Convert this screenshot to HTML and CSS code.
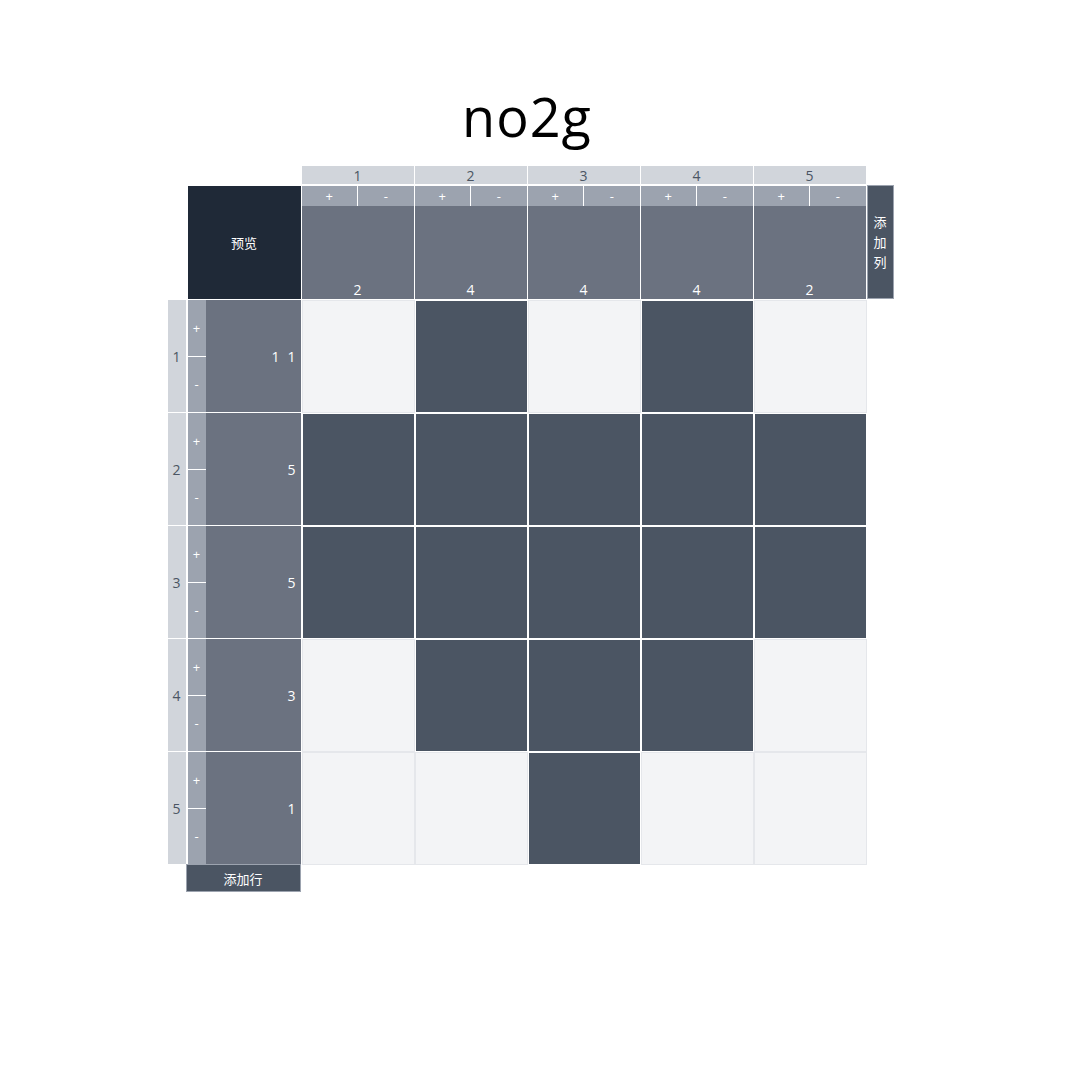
FILE: index.html
```html
<!DOCTYPE html>
<html lang="zh">
<head>
    <meta charset="UTF-8">
    <meta name="viewport" content="width=device-width, initial-scale=1.0">
    <title>no2g</title>
    <link rel="stylesheet" href="styles.css">
</head>
<body>
    <h1>no2g</h1>
    <div class="board">
        <div class="corner"><div class="preview">预览</div></div>

        <div class="col-head"><div class="num">1</div><div class="ctrl"><span>+</span><span>-</span></div><div class="clue"><span>2</span></div></div>
        <div class="col-head"><div class="num">2</div><div class="ctrl"><span>+</span><span>-</span></div><div class="clue"><span>4</span></div></div>
        <div class="col-head"><div class="num">3</div><div class="ctrl"><span>+</span><span>-</span></div><div class="clue"><span>4</span></div></div>
        <div class="col-head"><div class="num">4</div><div class="ctrl"><span>+</span><span>-</span></div><div class="clue"><span>4</span></div></div>
        <div class="col-head"><div class="num">5</div><div class="ctrl"><span>+</span><span>-</span></div><div class="clue"><span>2</span></div></div>
        <button type="button" class="add-col">添<br>加<br>列</button>

        <div class="row-head"><div class="num">1</div><div class="ctrl"><span>+</span><span>-</span></div><div class="clue"><span>1</span><span>1</span></div></div>
        <div class="cell"></div><div class="cell on"></div><div class="cell"></div><div class="cell on"></div><div class="cell"></div>
        <div></div>

        <div class="row-head"><div class="num">2</div><div class="ctrl"><span>+</span><span>-</span></div><div class="clue"><span>5</span></div></div>
        <div class="cell on"></div><div class="cell on"></div><div class="cell on"></div><div class="cell on"></div><div class="cell on"></div>
        <div></div>

        <div class="row-head"><div class="num">3</div><div class="ctrl"><span>+</span><span>-</span></div><div class="clue"><span>5</span></div></div>
        <div class="cell on"></div><div class="cell on"></div><div class="cell on"></div><div class="cell on"></div><div class="cell on"></div>
        <div></div>

        <div class="row-head"><div class="num">4</div><div class="ctrl"><span>+</span><span>-</span></div><div class="clue"><span>3</span></div></div>
        <div class="cell"></div><div class="cell on"></div><div class="cell on"></div><div class="cell on"></div><div class="cell"></div>
        <div></div>

        <div class="row-head"><div class="num">5</div><div class="ctrl"><span>+</span><span>-</span></div><div class="clue"><span>1</span></div></div>
        <div class="cell"></div><div class="cell"></div><div class="cell on"></div><div class="cell"></div><div class="cell"></div>
        <div></div>

        <button type="button" class="add-row">添加行</button>
    </div>
</body>
</html>
```

FILE: styles.css
```css
body {
    font-family: "Open Sans", "Noto Sans CJK SC", sans-serif;
    margin: 0;
    padding: 88px 4px 0 0;
    display: flex;
    flex-direction: column;
    align-items: center;
}

h1 {
    font-size: 54px;
    font-weight: normal;
    line-height: 56px;
    letter-spacing: 1px;
    margin: 0 0 22px;
    padding-right: 7px;
    color: #000;
}

.board {
    display: grid;
    grid-template-columns: 134px repeat(5, 113px) 27px;
    grid-template-rows: 134px repeat(5, 113px) 28px;
}

.corner {
    display: flex;
    justify-content: flex-end;
    align-items: flex-end;
}

.preview {
    box-sizing: border-box;
    width: 114px;
    height: 114px;
    background-color: #1f2937;
    border-right: 1px solid #fff;
    border-bottom: 1px solid #fff;
    color: #fff;
    font-size: 13px;
    display: flex;
    align-items: center;
    justify-content: center;
}

.num {
    background-color: #d1d5db;
    color: #4b5563;
    font-size: 14px;
    display: flex;
    align-items: center;
    justify-content: center;
}

.ctrl {
    background-color: #9ca3af;
    color: #fff;
    font-size: 13px;
    display: flex;
}

.ctrl span {
    flex: 1;
    display: flex;
    align-items: center;
    justify-content: center;
}

.clue {
    background-color: #6b7280;
    color: #fff;
    font-size: 14px;
    flex: 1;
    display: flex;
}

/* column headers */
.col-head {
    box-sizing: border-box;
    display: flex;
    flex-direction: column;
    border-right: 1px solid #fff;
    border-bottom: 1px solid #fff;
}

.col-head .num {
    height: 18px;
    margin-bottom: 2px;
}

.col-head .ctrl {
    height: 20px;
}

.col-head .ctrl span:first-child {
    border-right: 1px solid #fff;
}

.col-head .clue {
    justify-content: center;
    align-items: flex-end;
    line-height: 18px;
}

/* row headers */
.row-head {
    box-sizing: border-box;
    display: flex;
    border-right: 1px solid #fff;
    border-bottom: 1px solid #fff;
}

.row-head .num {
    width: 18px;
    margin-right: 2px;
}

.row-head .ctrl {
    width: 18px;
    flex-direction: column;
}

.row-head .ctrl span:first-child {
    border-bottom: 1px solid #fff;
}

.row-head .clue {
    justify-content: flex-end;
    align-items: center;
    padding-right: 5px;
}

.row-head .clue span + span {
    margin-left: 8px;
}

/* grid cells */
.cell {
    box-sizing: border-box;
    background-color: #f3f4f6;
    border: 1px solid #e5e7eb;
}

.cell.on {
    background-color: #4b5563;
    border-color: #fff;
}

/* add buttons */
.add-col,
.add-row {
    box-sizing: border-box;
    background-color: #4b5563;
    border: 1px solid #9ca3af;
    color: #fff;
    font-family: "Noto Sans CJK SC", sans-serif;
    font-size: 13px;
    padding: 0;
    cursor: pointer;
}

.add-col {
    align-self: end;
    height: 114px;
    line-height: 20px;
    margin-bottom: 1px;
}

.add-row {
    grid-column: 1;
    justify-self: end;
    width: 115px;
    height: 28px;
    margin-top: -1px;
    margin-right: 1px;
}
```
